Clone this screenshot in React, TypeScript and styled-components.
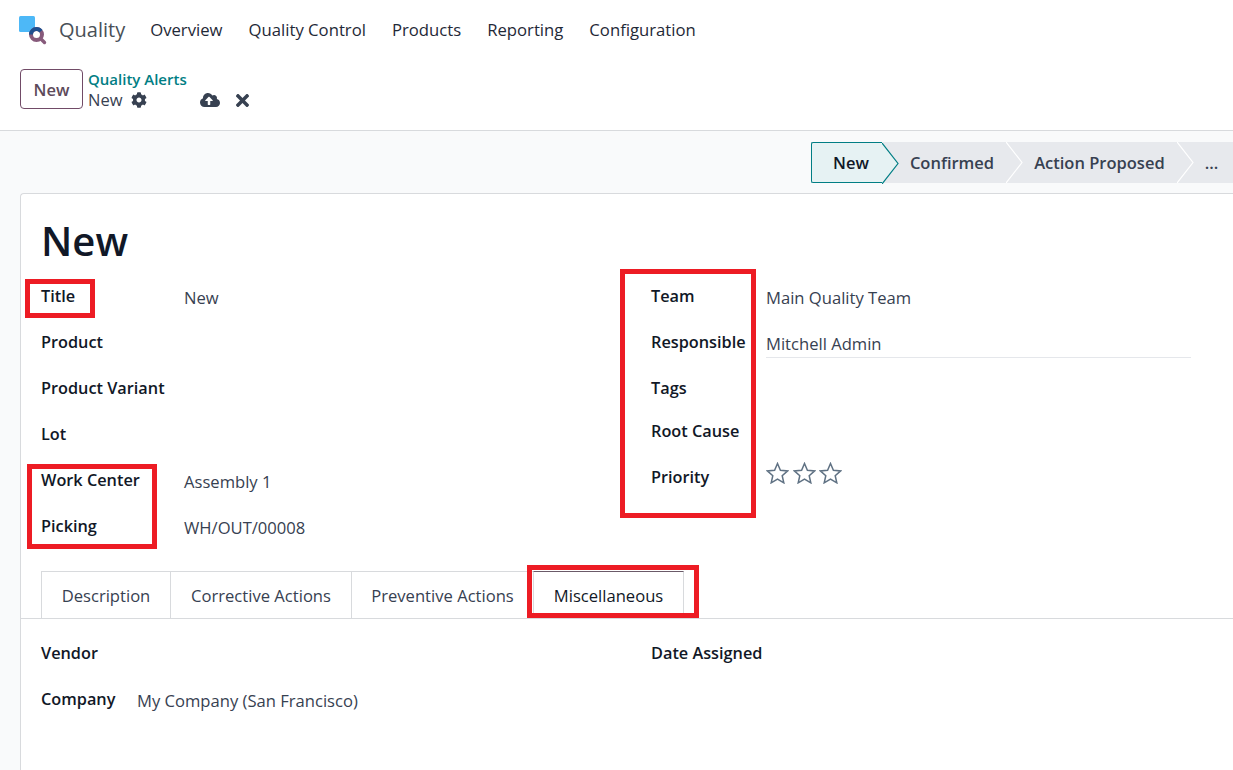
import React from "react";
import styled, { createGlobalStyle } from "styled-components";
import { FaCloudUploadAlt, FaCog, FaTimes } from "react-icons/fa";

const GlobalStyle = createGlobalStyle`
  html, body {
    margin: 0;
    padding: 0;
    background: #f9fafb;
  }
  body {
    font-family: "Open Sans", "Noto Sans", sans-serif;
    color: #374151;
  }
`;

const Page = styled.div`
  position: relative;
  width: 1233px;
  height: 770px;
  overflow: hidden;
  display: flex;
  flex-direction: column;
`;

const TopArea = styled.header`
  background: #fff;
  height: 130px;
  border-bottom: 1px solid #d8dadd;
  flex: none;
`;

const NavBar = styled.nav`
  display: flex;
  align-items: center;
  height: 58px;
  padding-left: 17px;
`;

const LogoMark = styled.svg`
  margin-top: 6px;
`;

const AppName = styled.span`
  font-size: 20px;
  color: #495057;
  margin-left: 10px;
  margin-right: 25px;
`;

const NavLink = styled.a`
  font-size: 16.7px;
  color: #1f2937;
  margin-right: 26px;
`;

const ControlPanel = styled.div`
  display: flex;
  align-items: center;
  padding: 11px 0 0 20px;
`;

const NewButton = styled.button`
  width: 63px;
  height: 40px;
  background: #fff;
  border: 1px solid #714b67;
  border-radius: 4px;
  font: 600 16.5px "Open Sans", sans-serif;
  color: #5d4a5a;
  padding: 0;
`;

const Breadcrumb = styled.div`
  margin-left: 5px;
  display: flex;
  flex-direction: column;
`;

const BreadcrumbLink = styled.a`
  font-size: 15px;
  font-weight: 600;
  line-height: 20px;
  color: #017e84;
`;

const CurrentRow = styled.div`
  display: flex;
  align-items: center;
  height: 20px;
  font-size: 16.5px;
  color: #374151;
`;

const IconSlot = styled.span<{ $left: number }>`
  display: inline-flex;
  margin-left: ${(p) => p.$left}px;
  margin-top: 2px;
  color: #374151;
`;

const StatusArea = styled.div`
  flex: none;
  height: 62px;
  display: flex;
  justify-content: flex-end;
  padding-top: 11px;
  box-sizing: border-box;
`;

const StatusBar = styled.div`
  display: flex;
  height: 41px;
  width: 422px;
`;

const Step = styled.div<{ $active?: boolean; $grow?: boolean }>`
  position: relative;
  display: flex;
  align-items: center;
  box-sizing: border-box;
  flex: ${(p) => (p.$grow ? "1" : "none")};
  height: 41px;
  padding: ${(p) => (p.$active ? "0 13px 0 21px" : "0 12px 0 28px")};
  font-size: 16.5px;
  font-weight: 600;
  color: ${(p) => (p.$active ? "#111827" : "#374151")};
  background: ${(p) => (p.$active ? "#e6f2f3" : "#e7e9ed")};
  ${(p) =>
    p.$active &&
    `
    border: 1px solid #017e84;
    border-right: 0;
    border-radius: 2px 0 0 2px;
  `}
`;

const StepArrow = styled.svg`
  position: absolute;
  left: 100%;
  top: 0;
  z-index: 1;
`;

const Sheet = styled.main`
  flex: 1;
  background: #fff;
  border: 1px solid #d8dadd;
  border-right: 0;
  border-bottom: 0;
  border-radius: 4px 0 0 0;
  margin-left: 20px;
`;

const Title = styled.h1`
  margin: 0;
  padding: 19px 0 0 20px;
  height: 90px;
  box-sizing: border-box;
  font-size: 40px;
  line-height: 56px;
  font-weight: 600;
  color: #111827;
`;

const Columns = styled.div`
  display: grid;
  grid-template-columns: 610px 540px;
  padding-left: 20px;
  height: 287px;
`;

const FieldGroup = styled.div`
  display: flex;
  flex-direction: column;
`;

const Field = styled.div<{ $height?: number }>`
  display: flex;
  height: ${(p) => p.$height ?? 46}px;
`;

const Label = styled.label<{ $width: number }>`
  width: ${(p) => p.$width}px;
  flex: none;
  font-size: 16.3px;
  font-weight: 600;
  line-height: 22px;
  margin-top: 1px;
  color: #111827;
`;

const Value = styled.div<{ $underline?: boolean; $top?: number }>`
  flex: 1;
  font-size: 16.6px;
  line-height: 26px;
  height: ${(p) => (p.$underline ? 26 : 27)}px;
  margin-top: ${(p) => p.$top ?? 1}px;
  color: #374151;
  ${(p) => p.$underline && "border-bottom: 1px solid #e5e7eb;"}
`;

const Stars = styled.div`
  display: flex;
  gap: 3.5px;
  margin-top: -3px;
`;

const TabBar = styled.div`
  display: flex;
  height: 47px;
  padding-left: 20px;
  border-bottom: 1px solid #d8dadd;
`;

const Tab = styled.div<{ $active?: boolean; $width: number }>`
  width: ${(p) => p.$width}px;
  box-sizing: border-box;
  display: flex;
  align-items: center;
  justify-content: center;
  font-size: 16.6px;
  background: #fff;
  color: ${(p) => (p.$active ? "#111827" : "#374151")};
  border: 1px solid #d8dadd;
  border-top-color: ${(p) => (p.$active ? "#6b5a68" : "#d8dadd")};
  border-right-width: 0;
  border-bottom: 0;
  &:last-child {
    border-right-width: 1px;
  }
`;

const TabContent = styled.div`
  display: grid;
  grid-template-columns: 610px 1fr;
  padding: 22px 0 0 20px;
`;

const AnnotationBox = styled.div<{ $x: number; $y: number; $w: number; $h: number }>`
  position: absolute;
  left: ${(p) => p.$x}px;
  top: ${(p) => p.$y}px;
  width: ${(p) => p.$w}px;
  height: ${(p) => p.$h}px;
  box-sizing: border-box;
  border: 5px solid #ed1c24;
  z-index: 5;
`;

function Logo() {
  return (
    <LogoMark width="32" height="32" viewBox="0 0 32 32">
      <rect x="2" y="0" width="16" height="16" rx="1.5" fill="#4db8f7" />
      <circle cx="19.5" cy="18.5" r="5.5" fill="#fff" stroke="#875a7b" strokeWidth="4" />
      <path d="M14 18.5a5.5 5.5 0 0 1 5.5-5.5 5.5 5.5 0 0 1 4.4 2.2" fill="none" stroke="#1f4f8f" strokeWidth="4" />
      <path d="M23.5 22.5l4 4" stroke="#875a7b" strokeWidth="3.4" strokeLinecap="round" />
    </LogoMark>
  );
}

function Star() {
  return (
    <svg width="23" height="22" viewBox="0 0 23 22">
      <polygon
        points="11.5,1.5 14.4,8.2 21.6,8.9 16.2,13.7 17.8,20.8 11.5,17.1 5.2,20.8 6.8,13.7 1.4,8.9 8.6,8.2"
        fill="none"
        stroke="#5f7183"
        strokeWidth="1.5"
        strokeLinejoin="miter"
      />
    </svg>
  );
}

function Arrow({ active }: { active?: boolean }) {
  return (
    <StepArrow width="17" height="41" viewBox="0 0 17 41">
      <path d="M0 0L16 20.5L0 41" fill={active ? "#e6f2f3" : "#e7e9ed"} stroke={active ? "#017e84" : "#fff"} strokeWidth="1.2" />
    </StepArrow>
  );
}

const navItems = ["Overview", "Quality Control", "Products", "Reporting", "Configuration"];

const leftFields = [
  { label: "Title", value: "New" },
  { label: "Product" },
  { label: "Product Variant" },
  { label: "Lot" },
  { label: "Work Center", value: "Assembly 1" },
  { label: "Picking", value: "WH/OUT/00008" },
];

const tabs = [
  { label: "Description", width: 129 },
  { label: "Corrective Actions", width: 181 },
  { label: "Preventive Actions", width: 182 },
  { label: "Miscellaneous", width: 151, active: true },
];

const annotations = [
  { x: 25, y: 279, w: 70, h: 39 },
  { x: 27, y: 464, w: 130, h: 85 },
  { x: 620, y: 269, w: 136, h: 249 },
  { x: 527, y: 565, w: 172, h: 53 },
];

export default function App() {
  return (
    <Page>
      <GlobalStyle />
      <TopArea>
        <NavBar>
          <Logo />
          <AppName>Quality</AppName>
          {navItems.map((item) => (
            <NavLink key={item}>{item}</NavLink>
          ))}
        </NavBar>
        <ControlPanel>
          <NewButton>New</NewButton>
          <Breadcrumb>
            <BreadcrumbLink>Quality Alerts</BreadcrumbLink>
            <CurrentRow>
              New
              <IconSlot $left={9}><FaCog size={16} /></IconSlot>
              <IconSlot $left={53}><FaCloudUploadAlt size={20} /></IconSlot>
              <IconSlot $left={13}><FaTimes size={19} /></IconSlot>
            </CurrentRow>
          </Breadcrumb>
        </ControlPanel>
      </TopArea>

      <StatusArea>
        <StatusBar>
          <Step $active>New<Arrow active /></Step>
          <Step>Confirmed<Arrow /></Step>
          <Step>Action Proposed<Arrow /></Step>
          <Step $grow>...</Step>
        </StatusBar>
      </StatusArea>

      <Sheet>
        <Title>New</Title>
        <Columns>
          <FieldGroup>
            {leftFields.map((f) => (
              <Field key={f.label}>
                <Label $width={143}>{f.label}</Label>
                {f.value && <Value>{f.value}</Value>}
              </Field>
            ))}
          </FieldGroup>
          <FieldGroup>
            <Field>
              <Label $width={115}>Team</Label>
              <Value>Main Quality Team</Value>
            </Field>
            <Field>
              <Label $width={115}>Responsible</Label>
              <Value $underline>Mitchell Admin</Value>
            </Field>
            <Field $height={43}>
              <Label $width={115}>Tags</Label>
            </Field>
            <Field>
              <Label $width={115}>Root Cause</Label>
            </Field>
            <Field>
              <Label $width={115}>Priority</Label>
              <Stars>
                <Star />
                <Star />
                <Star />
              </Stars>
            </Field>
          </FieldGroup>
        </Columns>
        <TabBar>
          {tabs.map((t) => (
            <Tab key={t.label} $width={t.width} $active={t.active}>
              {t.label}
            </Tab>
          ))}
        </TabBar>
        <TabContent>
          <FieldGroup>
            <Field>
              <Label $width={96}>Vendor</Label>
            </Field>
            <Field>
              <Label $width={96}>Company</Label>
              <Value>My Company (San Francisco)</Value>
            </Field>
          </FieldGroup>
          <FieldGroup>
            <Field>
              <Label $width={200}>Date Assigned</Label>
            </Field>
          </FieldGroup>
        </TabContent>
      </Sheet>

      {annotations.map((a) => (
        <AnnotationBox key={`${a.x}-${a.y}`} $x={a.x} $y={a.y} $w={a.w} $h={a.h} />
      ))}
    </Page>
  );
}
